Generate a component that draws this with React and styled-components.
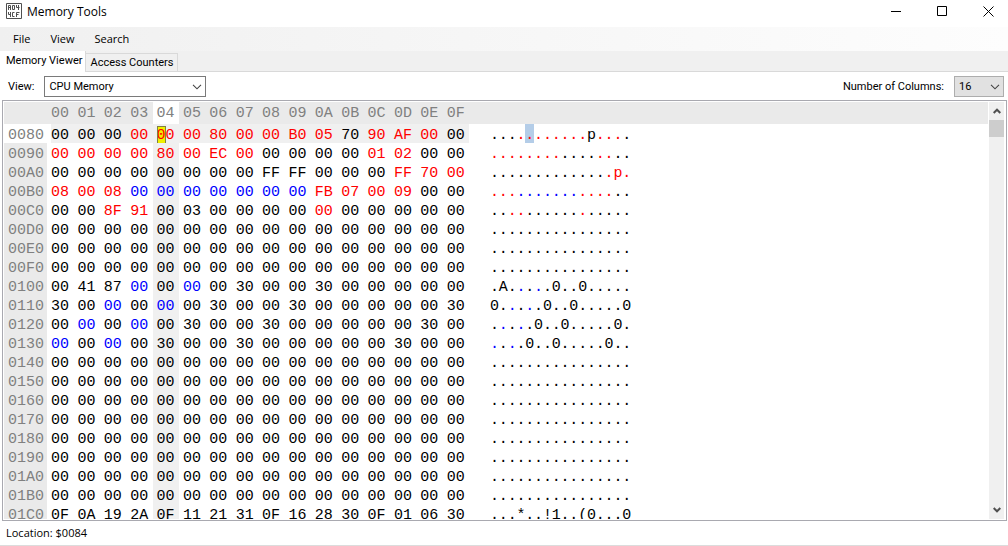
import React from 'react';
import styled, { createGlobalStyle } from 'styled-components';

const Global = createGlobalStyle`
  * { box-sizing: border-box; }
  body { margin: 0; background: #fff; color: #000; font-family: Roboto, "Liberation Sans", sans-serif; font-size: 11px; }
`;

const Window = styled.div`
  display: flex;
  flex-direction: column;
  height: 100vh;
  border-bottom: 1px solid #dcdcdc;
`;

const TitleBar = styled.header`
  display: flex;
  align-items: center;
  height: 27px;
  padding-left: 6px;
  flex: none;
`;

const Title = styled.h1`
  margin: 0 auto 4px 5px;
  font: 400 12px/16px "Open Sans", "Noto Sans", sans-serif;
`;

const AppIcon = styled.svg`
  width: 16px;
  height: 16px;
  margin-bottom: 5px;
`;

const CaptionButton = styled.button`
  display: grid;
  place-items: center;
  width: 46px;
  height: 22px;
  margin-bottom: 5px;
  padding: 0 0 0 6px;
  border: 0;
  background: none;
`;

const MenuBar = styled.nav`
  display: flex;
  align-items: center;
  gap: 4px;
  height: 24px;
  padding-left: 5px;
  flex: none;
  background: linear-gradient(to right, #f0f0f0, #fdfdfd);
`;

const MenuItem = styled.button`
  padding: 0 8px;
  border: 0;
  background: none;
  color: #000;
  font: 11px/20px "Open Sans", "Noto Sans", sans-serif;
`;

const TabStrip = styled.div`
  display: flex;
  align-items: flex-end;
  height: 21px;
  flex: none;
  background: #f0f0f0;
  box-shadow: inset 0 -1px #d9d9d9;
`;

const Tab = styled.button`
  height: ${p => (p.$active ? 21 : 19)}px;
  padding: ${p => (p.$active ? '0 3px 1px 6px' : '1px 4px 0')};
  border: 1px solid #d9d9d9;
  border-width: ${p => (p.$active ? '0 1px 0 0' : '1px 1px 1px 0')};
  background: ${p => (p.$active ? '#fff' : '#f0f0f0')};
  color: #000;
  font: inherit;
  line-height: 16px;
`;

const Toolbar = styled.div`
  display: flex;
  align-items: center;
  justify-content: space-between;
  height: 28px;
  padding: 1px 4px 0 8px;
  flex: none;
`;

const Field = styled.label`
  display: flex;
  align-items: center;
  gap: 10px;
`;

const SelectBox = styled.span`
  display: grid;
  align-items: center;
  width: ${p => p.$width}px;
  height: 21px;

  > * { grid-area: 1 / 1; }
  > svg { justify-self: end; margin-right: 4px; pointer-events: none; }
`;

const Select = styled.select`
  appearance: none;
  width: 100%;
  height: 21px;
  padding: 0 4px;
  border: 1px solid ${p => (p.$muted ? '#adadad' : '#7a7a7a')};
  border-radius: 0;
  background: ${p => (p.$muted ? '#e1e1e1' : '#fff')};
  color: #000;
  font: inherit;
`;

const Panel = styled.main`
  display: flex;
  flex: 1;
  min-height: 0;
  margin: 0 1px 0 2px;
  padding: 1px;
  border: 1px solid #a9a9b0;
`;

const Viewport = styled.div`
  display: flex;
  flex: 1;
  min-width: 0;
  overflow: hidden;
  font: 15px/15px "Liberation Mono", monospace;
`;

const HexTable = styled.table`
  display: block;
  flex: none;
  width: 465px;

  thead, tbody { display: block; }
`;

const Row = styled.tr`
  display: grid;
  grid-template-columns: 43px repeat(16, minmax(0, 1fr));
  background: ${p => (p.$current ? '#f0f0f0' : 'transparent')};
  box-shadow: ${p => (p.$current ? 'inset 47px 0 #fff' : 'none')};
`;

const ColumnHead = styled.th`
  height: 22px;
  padding: 2px 0 0 4px;
  background: ${p => (p.$current ? '#fff' : '#eaeaea')};
  color: #808080;
  font-weight: 400;
  line-height: 20px;
  text-align: left;
`;

const Address = styled.th`
  height: 19px;
  padding: 4px 0 0 4px;
  background: ${p => (p.$current ? '#fff' : '#eaeaea')};
  color: #808080;
  font-weight: 400;
  text-align: left;
`;

const inks = { k: '#000', r: '#f00', b: '#00f' };

const Byte = styled.td`
  height: 19px;
  padding: 4px 0 0 4px;
  background: ${p => (p.$marked ? '#f0f0f0' : 'transparent')};
  color: ${p => inks[p.$ink]};
`;

const Cursor = styled.mark`
  padding: 1px 0;
  background: #f0f000;
  color: inherit;
  outline: 1px solid #808040;
  outline-offset: -1px;
`;

const TextPane = styled.div`
  flex: 1;
  min-width: 0;
`;

const TextHead = styled.div`
  height: 22px;
  background: #eaeaea;
`;

const TextRow = styled.div`
  display: grid;
  grid-template-columns: repeat(16, minmax(0, 1fr));
  width: 162px;
  height: 19px;
  padding-left: 21px;
`;

const Char = styled.span`
  padding-top: 4px;
  background: ${p => (p.$selected ? '#b4cde8' : 'transparent')};
  color: ${p => inks[p.$ink]};
`;

const ScrollBar = styled.div`
  display: flex;
  flex-direction: column;
  width: 17px;
  flex: none;
  background: #f0f0f0;
  border: solid #fff;
  border-width: 0 1px;
`;

const ScrollButton = styled.button`
  display: grid;
  place-items: center;
  height: 18px;
  padding: 0;
  border: 0;
  background: none;
`;

const Thumb = styled.div`
  height: 17px;
  margin-bottom: auto;
  background: #cdcdcd;
`;

const StatusBar = styled.footer`
  height: 24px;
  padding-left: 6px;
  flex: none;
  font-family: "Open Sans", "Noto Sans", sans-serif;
  line-height: 24px;
`;

const memory = [
  ['0080', '00 00 00 00 00 00 80 00 00 B0 05 70 90 AF 00 00', 'kkkrrrrrrrrkrrrk', '...........p....'],
  ['0090', '00 00 00 00 80 00 EC 00 00 00 00 00 01 02 00 00', 'rrrrrrrrkkkkrrkk', '................'],
  ['00A0', '00 00 00 00 00 00 00 00 FF FF 00 00 00 FF 70 00', 'kkkkkkkkkkkkkrrr', '..............p.'],
  ['00B0', '08 00 08 00 00 00 00 00 00 00 FB 07 00 09 00 00', 'rrrbbbbbbbrrrrkk', '................'],
  ['00C0', '00 00 8F 91 00 03 00 00 00 00 00 00 00 00 00 00', 'kkrrkkkkkkrkkkkk', '................'],
  ['00D0'], ['00E0'], ['00F0'],
  ['0100', '00 41 87 00 00 00 00 30 00 00 30 00 00 00 00 00', 'kkkbkbkkkkkkkkkk', '.A.....0..0.....'],
  ['0110', '30 00 00 00 00 00 30 00 00 30 00 00 00 00 00 30', 'kkbkbkkkkkkkkkkk', '0.....0..0.....0'],
  ['0120', '00 00 00 00 00 30 00 00 30 00 00 00 00 00 30 00', 'kbkbkkkkkkkkkkkk', '.....0..0.....0.'],
  ['0130', '00 00 00 00 30 00 00 30 00 00 00 00 00 30 00 00', 'bkbkkkkkkkkkkkkk', '....0..0.....0..'],
  ['0140'], ['0150'], ['0160'], ['0170'], ['0180'], ['0190'], ['01A0'], ['01B0'],
  ['01C0', '0F 0A 19 2A 0F 11 21 31 0F 16 28 30 0F 01 06 30', 'kkkkkkkkkkkkkkkk', '...*..!1..(0...0'],
].map(([address, bytes, ink = 'k'.repeat(16), text = '.'.repeat(16)]) => ({
  address,
  bytes: bytes ? bytes.split(' ') : Array(16).fill('00'),
  ink,
  text,
}));

const columns = Array.from({ length: 16 }, (_, i) => '0' + i.toString(16).toUpperCase());
const current = { row: 0, column: 4 };

const Chevron = () => (
  <svg width="10" height="6" viewBox="0 0 10 6" fill="none" stroke="#444" strokeWidth="1.1">
    <path d="M1 .8 5 4.8 9 .8" />
  </svg>
);

const Arrow = ({ down }) => (
  <svg width="8" height="6" viewBox="0 0 8 6" fill="none" stroke="#505050" strokeWidth="2">
    <path d={down ? 'M.7 1 4 4.3 7.3 1' : 'M.7 5 4 1.7 7.3 5'} />
  </svg>
);

export default function App() {
  return (
    <Window>
      <Global />
      <TitleBar>
        <AppIcon viewBox="0 0 16 16" fill="none" stroke="#505050">
          <path d="M.5.5h15v15H.5zM2.5 7V2.5h2V7M2.5 4.5h2M6.5 2.5h2v4h-2zM10.5 2v2.5h3M12.5 2v5M2.5 9v2.5h2M4.5 9v5M8.5 9.5h-2v4h2M13.5 9.5h-3V14M10.5 11.500h2" />
        </AppIcon>
        <Title>Memory Tools</Title>
        <CaptionButton aria-label="Minimize">
          <svg width="11" height="11" stroke="#000"><path d="M0 5.500h10" /></svg>
        </CaptionButton>
        <CaptionButton aria-label="Maximize">
          <svg width="10" height="10" stroke="#000" fill="none"><path d="M.5.5h9v9h-9z" /></svg>
        </CaptionButton>
        <CaptionButton aria-label="Close">
          <svg width="11" height="11" stroke="#000"><path d="M.5.5l10 10M10.500.500l-10 10" /></svg>
        </CaptionButton>
      </TitleBar>
      <MenuBar>
        <MenuItem>File</MenuItem>
        <MenuItem>View</MenuItem>
        <MenuItem>Search</MenuItem>
      </MenuBar>
      <TabStrip role="tablist">
        <Tab role="tab" aria-selected="true" $active>Memory Viewer</Tab>
        <Tab role="tab" aria-selected="false">Access Counters</Tab>
      </TabStrip>
      <Toolbar>
        <Field>
          View:
          <SelectBox $width={162}>
            <Select><option>CPU Memory</option></Select>
            <Chevron />
          </SelectBox>
        </Field>
        <Field>
          Number of Columns:
          <SelectBox $width={50}>
            <Select $muted><option>16</option></Select>
            <Chevron />
          </SelectBox>
        </Field>
      </Toolbar>
      <Panel>
        <Viewport>
          <HexTable>
            <thead>
              <Row>
                <ColumnHead aria-label="Address" />
                {columns.map((label, i) => (
                  <ColumnHead key={label} $current={i === current.column}>{label}</ColumnHead>
                ))}
              </Row>
            </thead>
            <tbody>
              {memory.map((line, r) => (
                <Row key={line.address} $current={r === current.row}>
                  <Address $current={r === current.row}>{line.address}</Address>
                  {line.bytes.map((byte, c) => (
                    <Byte key={c} $ink={line.ink[c]} $marked={c === current.column}>
                      {r === current.row && c === current.column ? <><Cursor>{byte[0]}</Cursor>{byte[1]}</> : byte}
                    </Byte>
                  ))}
                </Row>
              ))}
            </tbody>
          </HexTable>
          <TextPane>
            <TextHead />
            {memory.map((line, r) => (
              <TextRow key={line.address}>
                {[...line.text].map((char, c) => (
                  <Char key={c} $ink={line.ink[c]} $selected={r === current.row && c === current.column}>{char}</Char>
                ))}
              </TextRow>
            ))}
          </TextPane>
        </Viewport>
        <ScrollBar>
          <ScrollButton aria-label="Scroll up"><Arrow /></ScrollButton>
          <Thumb />
          <ScrollButton aria-label="Scroll down"><Arrow down /></ScrollButton>
        </ScrollBar>
      </Panel>
      <StatusBar>Location: $0084</StatusBar>
    </Window>
  );
}
